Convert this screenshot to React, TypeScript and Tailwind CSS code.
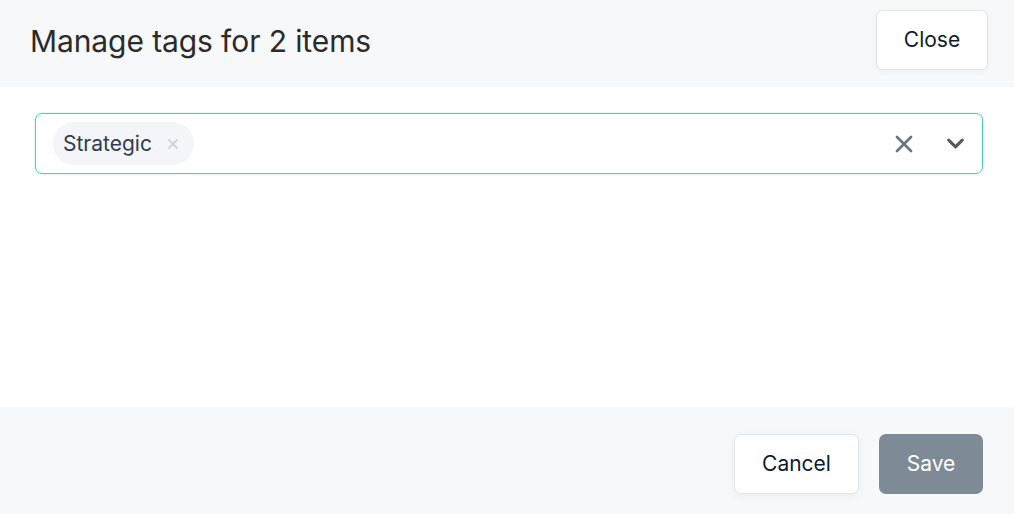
import { X, ChevronDown } from 'lucide-react';

export default function App() {
  return (
    <div className="w-[1014px] h-[514px] flex flex-col bg-white font-['Inter',sans-serif] overflow-hidden">
      {/* Header */}
      <div className="h-[87px] bg-[#f7f8fa] flex items-start justify-between pl-[30px] pr-[26px] pt-[10px]">
        <h1 className="mt-[13px] text-[30px] leading-[36px] text-[#2b2b2b] font-normal tracking-[-0.1px]">
          Manage tags for 2 items
        </h1>
        <button className="w-[112px] h-[60px] bg-white border border-[#e2e6ec] rounded-[7px] text-[21px] text-[#0e1c2c] shadow-[0_2px_6px_rgba(30,40,60,0.04)]">
          Close
        </button>
      </div>

      {/* Body */}
      <div className="flex-1 pl-[35px] pr-[31px] pt-[26px]">
        <div className="h-[61px] flex items-center border border-[#3fdca6] rounded-[7px] shadow-[0_0_0_1px_rgba(63,220,166,0.15)] pl-[17px] pr-[13px]">
          <div className="flex-1 flex items-center">
            <span className="h-[43px] flex items-center gap-[13px] pl-[10px] pr-[13px] rounded-full bg-[#f3f5f8] text-[21px] text-[#2f3b52]">
              Strategic
              <X size={16} strokeWidth={3} className="text-[#cfd5de]" />
            </span>
          </div>
          <X size={28} strokeWidth={2.3} className="text-[#6b7587] mr-[24px]" />
          <ChevronDown size={27} strokeWidth={2.8} className="text-[#555a60]" />
        </div>
      </div>

      {/* Footer */}
      <div className="h-[107px] bg-[#f7f8fa] flex items-start justify-end gap-[20px] pr-[31px] pt-[27px]">
        <button className="w-[125px] h-[60px] bg-white border border-[#e2e6ec] rounded-[7px] text-[21px] text-[#0e1c2c] shadow-[0_2px_8px_rgba(30,40,60,0.05)]">
          Cancel
        </button>
        <button className="w-[104px] h-[60px] bg-[#7f8a97] rounded-[7px] text-[21px] text-white">
          Save
        </button>
      </div>
    </div>
  );
}
